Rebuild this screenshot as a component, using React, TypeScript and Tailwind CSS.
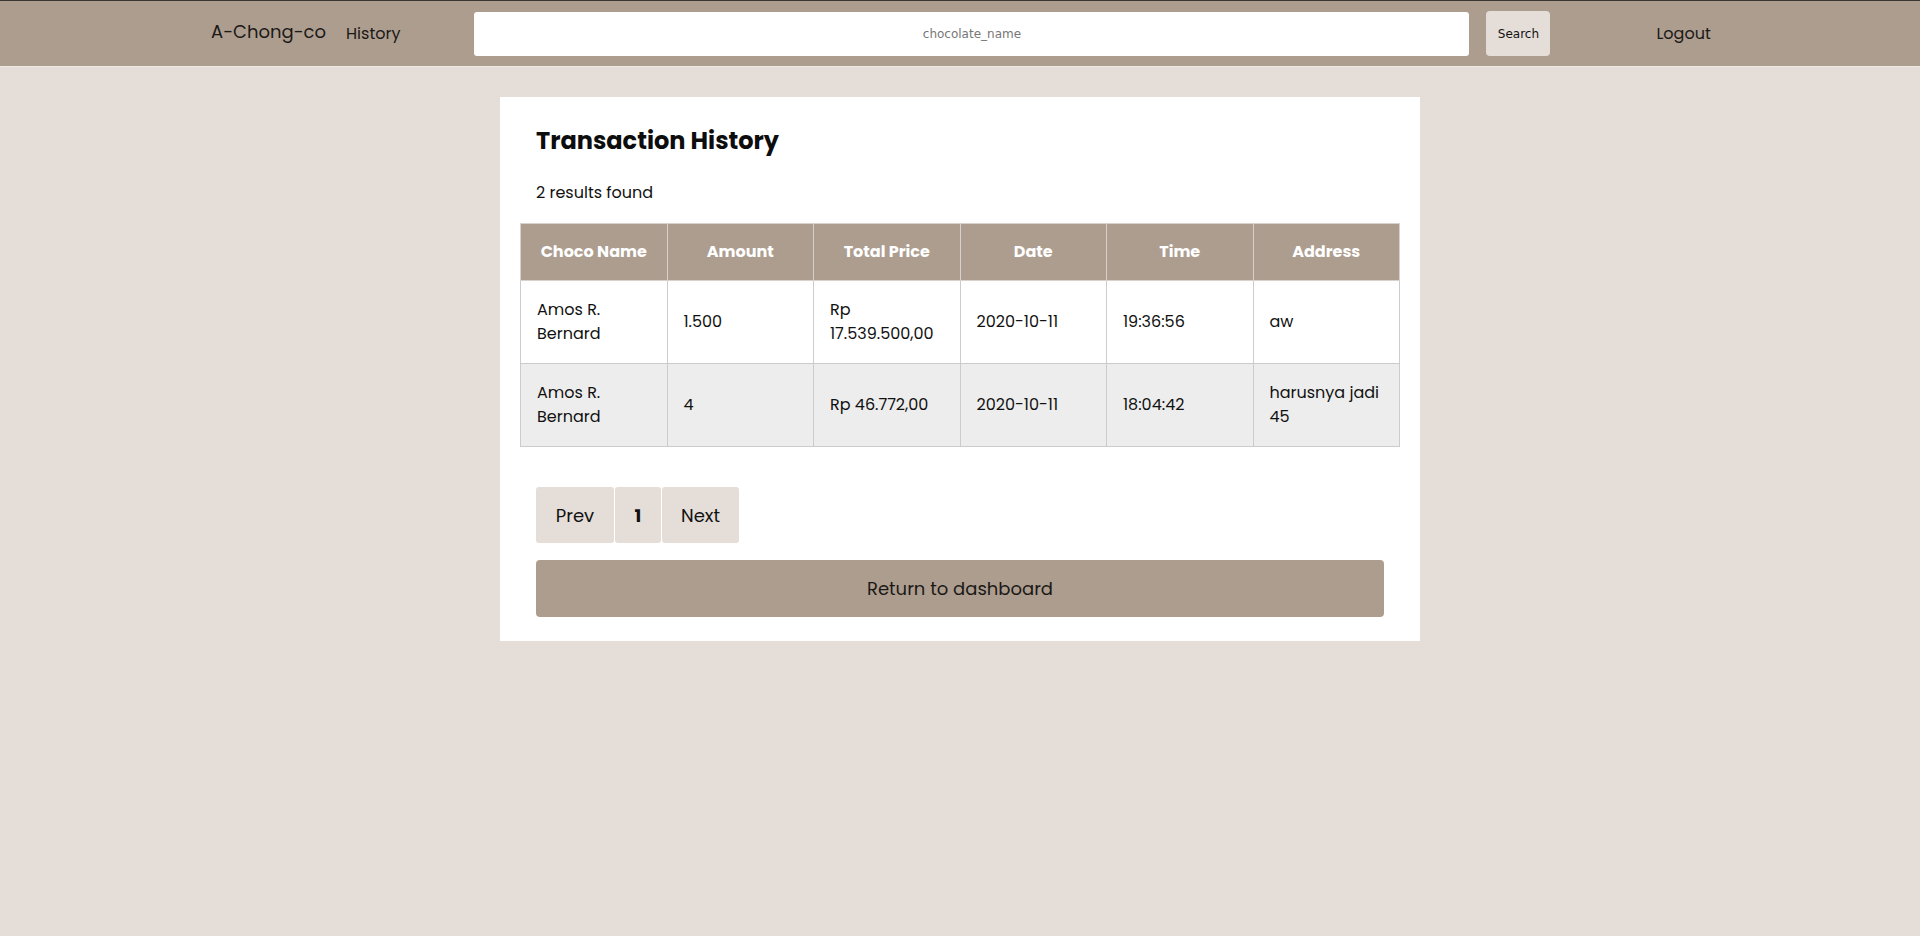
import { useState } from "react";

type Transaction = {
  name: string;
  amount: string;
  total: string;
  date: string;
  time: string;
  address: string;
};

const transactions: Transaction[] = [
  {
    name: "Amos R. Bernard",
    amount: "1.500",
    total: "Rp 17.539.500,00",
    date: "2020-10-11",
    time: "19:36:56",
    address: "aw",
  },
  {
    name: "Amos R. Bernard",
    amount: "4",
    total: "Rp 46.772,00",
    date: "2020-10-11",
    time: "18:04:42",
    address: "harusnya jadi 45",
  },
];

const columns = ["Choco Name", "Amount", "Total Price", "Date", "Time", "Address"];

export default function App() {
  const [query, setQuery] = useState("");

  return (
    <div className="min-h-screen bg-[#e5ddd8] font-['Poppins','Open_Sans',sans-serif] text-[#111]">
      {/* navbar */}
      <nav className="flex h-[66px] items-center border-t border-[#3b3733] bg-[#ad9d8f] shadow-[0_1px_0_#efe9e5]">
        <span className="mb-[5px] ml-[211px] text-[18px] text-[#1b1916]">A-Chong-co</span>
        <a className="ml-[20px] text-[16px] text-[#1b1916]">History</a>
        <input
          value={query}
          onChange={(e) => setQuery(e.target.value)}
          placeholder="chocolate_name"
          className="ml-[74px] h-[44px] w-[995px] rounded-[3px] bg-white text-center font-['DejaVu_Sans',sans-serif] text-[12px] text-[#333] outline-none placeholder:text-[#777]"
        />
        <button className="ml-[17px] h-[45px] w-[64px] rounded-[4px] bg-[#e5ddd8] font-['DejaVu_Sans',sans-serif] text-[12px] text-[#111]">
          Search
        </button>
        <a className="ml-[106px] text-[16px] text-[#1b1916]">Logout</a>
      </nav>

      {/* card */}
      <div className="mx-auto mt-[31px] w-[920px] bg-white px-[36px] pb-[24px] pt-[25px]">
        <h1 className="text-[24px] font-bold leading-[38px] text-[#0d0d0d]">Transaction History</h1>
        <p className="mt-[21px] text-[16px] leading-6">{transactions.length} results found</p>

        <table className="-mx-4 mt-[18px] w-[880px] table-fixed border-collapse text-[16px]">
          <thead>
            <tr className="bg-[#ad9d8f]">
              {columns.map((c) => (
                <th
                  key={c}
                  className="border border-[#d9d2cc] px-4 py-[16px] text-center font-bold leading-6 text-white"
                >
                  {c}
                </th>
              ))}
            </tr>
          </thead>
          <tbody>
            {transactions.map((t, i) => (
              <tr key={i} className={i % 2 === 1 ? "bg-[#ededed]" : "bg-white"}>
                {[t.name, t.amount, t.total, t.date, t.time, t.address].map((v, j) => (
                  <td
                    key={j}
                    className="border border-[#cccccc] px-4 py-[17px] text-left align-middle leading-6 text-[#111]"
                  >
                    {v}
                  </td>
                ))}
              </tr>
            ))}
          </tbody>
        </table>

        <div className="mt-[40px] flex gap-px">
          <button className="h-[56px] w-[78px] rounded-[3px] bg-[#e5ddd8] text-[18px]">Prev</button>
          <button className="h-[56px] w-[46px] rounded-[3px] bg-[#e5ddd8] text-[18px] font-bold">1</button>
          <button className="h-[56px] w-[77px] rounded-[3px] bg-[#e5ddd8] text-[18px]">Next</button>
        </div>

        <button className="mt-[17px] h-[57px] w-full rounded-[4px] bg-[#ad9d8f] text-[18px] text-[#1b1916]">
          Return to dashboard
        </button>
      </div>
    </div>
  );
}
